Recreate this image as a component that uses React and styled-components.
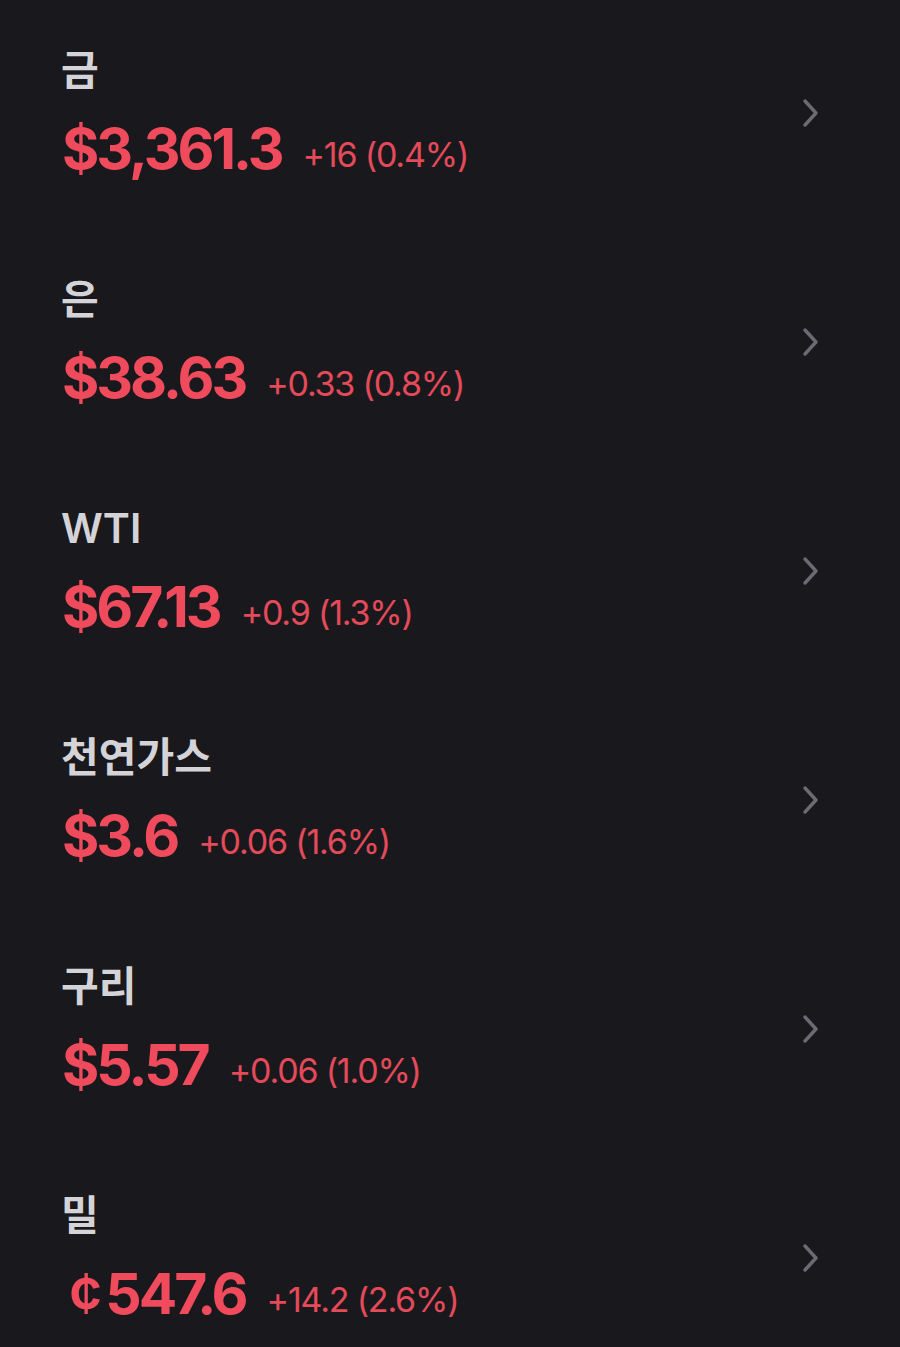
import React from 'react';
import styled, { createGlobalStyle } from 'styled-components';

const GlobalStyle = createGlobalStyle`
  html, body {
    margin: 0;
    padding: 0;
    background: #19191d;
  }
  body {
    font-family: Inter, "Noto Sans CJK KR", sans-serif;
    -webkit-font-smoothing: antialiased;
  }
`;

const List = styled.div`
  display: flex;
  flex-direction: column;
  background: #19191d;
  min-height: 1347px;
`;

const Row = styled.div`
  display: flex;
  align-items: center;
  justify-content: space-between;
  height: 229px;
  padding: 0 80px 0 62px;
  box-sizing: border-box;
`;

const Info = styled.div`
  display: flex;
  flex-direction: column;
  gap: 25px;
`;

const Name = styled.div`
  font-family: Inter, "Noto Sans CJK KR", sans-serif;
  font-size: 41px;
  font-weight: 600;
  line-height: 44px;
  color: #d4d4d8;
  margin-left: -1px;
`;

const PriceLine = styled.div`
  display: flex;
  align-items: baseline;
  gap: 21px;
  color: #ef4b5c;
`;

const Price = styled.span`
  font-size: 57px;
  font-weight: 700;
  line-height: 64px;
  letter-spacing: -3px;
`;

const Unit = styled.span`
  font-weight: 600;
  margin: 0 6px 0 7px;
`;

const Change = styled.span`
  font-size: 34px;
  font-weight: 400;
  letter-spacing: -1.2px;
  color: #e44a59;
  position: relative;
  top: -2px;
`;

const ChevronBox = styled.div`
  display: flex;
  margin-bottom: 4px;
`;

const Chevron = () => (
  <ChevronBox>
    <svg width="18" height="30" viewBox="0 0 18 30" fill="none">
      <path d="M3 3 L14 15 L3 27" stroke="#6b6b72" strokeWidth="3.4" strokeLinecap="round" strokeLinejoin="round" />
    </svg>
  </ChevronBox>
);

const items = [
  { name: '금', unit: '$', price: '3,361.3', change: '+16 (0.4%)' },
  { name: '은', unit: '$', price: '38.63', change: '+0.33 (0.8%)' },
  { name: 'WTI', unit: '$', price: '67.13', change: '+0.9 (1.3%)' },
  { name: '천연가스', unit: '$', price: '3.6', change: '+0.06 (1.6%)' },
  { name: '구리', unit: '$', price: '5.57', change: '+0.06 (1.0%)' },
  { name: '밀', unit: '¢', price: '547.6', change: '+14.2 (2.6%)' },
];

export default function App() {
  return (
    <>
      <GlobalStyle />
      <List>
        {items.map(item => (
          <Row key={item.name}>
            <Info>
              <Name>{item.name}</Name>
              <PriceLine>
                <Price>
                  {item.unit === '¢' ? <Unit>¢</Unit> : item.unit}
                  {item.price}
                </Price>
                <Change>{item.change}</Change>
              </PriceLine>
            </Info>
            <Chevron />
          </Row>
        ))}
      </List>
    </>
  );
}
